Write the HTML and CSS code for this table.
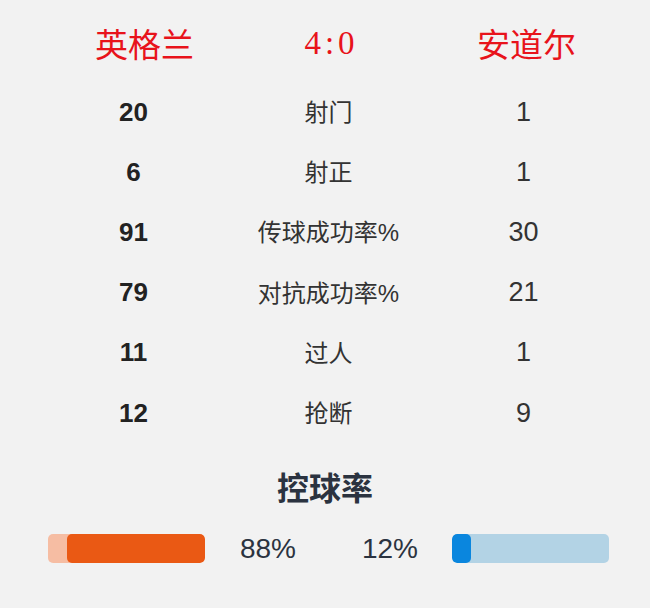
FILE: index.html
```html
<!DOCTYPE html>
<html lang="zh">
<head>
<meta charset="utf-8">
<link rel="stylesheet" href="styles.css">
</head>
<body>
<div class="page">
  <div class="header">
    <div class="team team-home">英格兰</div>
    <div class="score">4:0</div>
    <div class="team">安道尔</div>
  </div>
  <div class="stats">
    <div class="row"><div class="home">20</div><div class="label">射门</div><div class="away">1</div></div>
    <div class="row"><div class="home">6</div><div class="label">射正</div><div class="away">1</div></div>
    <div class="row"><div class="home">91</div><div class="label">传球成功率%</div><div class="away">30</div></div>
    <div class="row"><div class="home">79</div><div class="label">对抗成功率%</div><div class="away">21</div></div>
    <div class="row"><div class="home">11</div><div class="label">过人</div><div class="away">1</div></div>
    <div class="row"><div class="home">12</div><div class="label">抢断</div><div class="away">9</div></div>
  </div>
  <div class="poss-title">控球率</div>
  <div class="poss">
    <div class="bar bar-home"><div class="fill fill-home" style="width:88%"></div></div>
    <div class="pct pct-home">88%</div>
    <div class="pct pct-away">12%</div>
    <div class="bar bar-away"><div class="fill fill-away" style="width:12%"></div></div>
  </div>
</div>
</body>
</html>
```
FILE: styles.css
```css
html, body {
  margin: 0;
  padding: 0;
  background: #f2f2f2;
}
.page {
  width: 650px;
  height: 608px;
  font-family: "Liberation Sans", Arial, "Noto Sans CJK SC", sans-serif;
}
.header {
  display: grid;
  grid-template-columns: 195px 195px 195px;
  padding-left: 39px;
  height: 86px;
  align-items: center;
  color: #e8131b;
  font-family: "Liberation Serif", "Noto Sans CJK SC", serif;
  font-size: 33px;
  font-weight: normal;
  text-align: center;
}
.team-home {
  padding-left: 16px;
}
.score {
  letter-spacing: 4px;
  font-size: 33px;
}
.stats {
  padding-left: 36px;
  margin-top: -2px;
}
.row {
  display: grid;
  grid-template-columns: 195px 195px 195px;
  height: 60.2px;
  align-items: center;
  text-align: center;
}
.row > div {
  margin-top: -4px;
}
.row > .label {
  margin-top: -7px;
}
.home {
  font-size: 26px;
  font-weight: bold;
  color: #222;
}
.label {
  font-size: 24px;
  color: #333;
}
.away {
  font-size: 27px;
  color: #333;
}
.poss-title {
  margin-top: 24px;
  height: 40px;
  line-height: 40px;
  text-align: center;
  font-size: 32px;
  font-weight: bold;
  color: #2b3340;
}
.poss {
  display: flex;
  align-items: center;
  margin-top: 25px;
  padding-left: 48px;
  height: 29px;
}
.bar {
  width: 157px;
  height: 29px;
  border-radius: 5px;
  display: flex;
  overflow: hidden;
}
.bar-home {
  background: #f6bda3;
  justify-content: flex-end;
}
.bar-away {
  background: #b3d3e5;
  justify-content: flex-start;
}
.fill {
  height: 100%;
  border-radius: 5px;
}
.fill-home {
  background: #ea5914;
}
.fill-away {
  background: #0a86de;
}
.pct {
  font-size: 28px;
  color: #2b3340;
  text-align: center;
}
.pct-home {
  width: 126px;
}
.pct-away {
  width: 118px;
  margin-right: 3px;
}
```
